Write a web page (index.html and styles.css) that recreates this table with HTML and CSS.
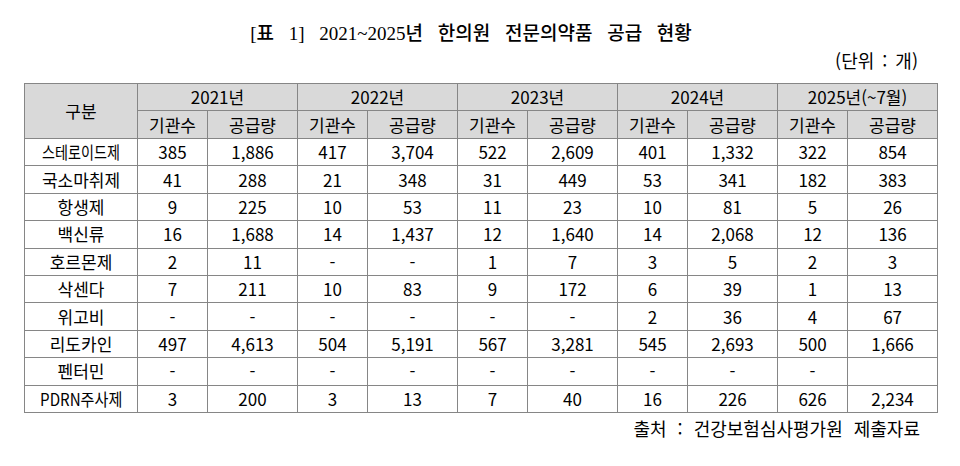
FILE: index.html
```html
<!DOCTYPE html>
<html lang="ko">
<head>
<meta charset="utf-8">
<link rel="stylesheet" href="styles.css">
</head>
<body>
<div class="page">
  <h1 class="title">[표 1] 2021~2025년 한의원 전문의약품 공급 현황</h1>
  <div class="unit">(단위 : 개)</div>
  <table class="data">
    <colgroup>
      <col class="c-name">
      <col class="c-n"><col class="c-q">
      <col class="c-n"><col class="c-q">
      <col class="c-n"><col class="c-q">
      <col class="c-n"><col class="c-q">
      <col class="c-n"><col class="c-q">
    </colgroup>
    <thead>
      <tr class="h1">
        <th rowspan="2">구분</th>
        <th colspan="2">2021년</th>
        <th colspan="2">2022년</th>
        <th colspan="2">2023년</th>
        <th colspan="2">2024년</th>
        <th colspan="2">2025년(~7월)</th>
      </tr>
      <tr class="h2">
        <th>기관수</th><th>공급량</th>
        <th>기관수</th><th>공급량</th>
        <th>기관수</th><th>공급량</th>
        <th>기관수</th><th>공급량</th>
        <th>기관수</th><th>공급량</th>
      </tr>
    </thead>
    <tbody>
      <tr><td><span class="squeeze s83">스테로이드제</span></td><td>385</td><td>1,886</td><td>417</td><td>3,704</td><td>522</td><td>2,609</td><td>401</td><td>1,332</td><td>322</td><td>854</td></tr>
      <tr><td>국소마취제</td><td>41</td><td>288</td><td>21</td><td>348</td><td>31</td><td>449</td><td>53</td><td>341</td><td>182</td><td>383</td></tr>
      <tr><td>항생제</td><td>9</td><td>225</td><td>10</td><td>53</td><td>11</td><td>23</td><td>10</td><td>81</td><td>5</td><td>26</td></tr>
      <tr><td>백신류</td><td>16</td><td>1,688</td><td>14</td><td>1,437</td><td>12</td><td>1,640</td><td>14</td><td>2,068</td><td>12</td><td>136</td></tr>
      <tr><td>호르몬제</td><td>2</td><td>11</td><td>-</td><td>-</td><td>1</td><td>7</td><td>3</td><td>5</td><td>2</td><td>3</td></tr>
      <tr><td>삭센다</td><td>7</td><td>211</td><td>10</td><td>83</td><td>9</td><td>172</td><td>6</td><td>39</td><td>1</td><td>13</td></tr>
      <tr><td>위고비</td><td>-</td><td>-</td><td>-</td><td>-</td><td>-</td><td>-</td><td>2</td><td>36</td><td>4</td><td>67</td></tr>
      <tr><td>리도카인</td><td>497</td><td>4,613</td><td>504</td><td>5,191</td><td>567</td><td>3,281</td><td>545</td><td>2,693</td><td>500</td><td>1,666</td></tr>
      <tr><td>펜터민</td><td>-</td><td>-</td><td>-</td><td>-</td><td>-</td><td>-</td><td>-</td><td>-</td><td>-</td><td></td></tr>
      <tr><td><span class="squeeze s90">PDRN주사제</span></td><td>3</td><td>200</td><td>3</td><td>13</td><td>7</td><td>40</td><td>16</td><td>226</td><td>626</td><td>2,234</td></tr>
    </tbody>
  </table>
  <div class="source">출처 : 건강보험심사평가원 제출자료</div>
</div>
</body>
</html>
```

FILE: styles.css
```css
html, body {
  margin: 0;
  padding: 0;
  background: #ffffff;
}

.page {
  width: 960px;
  height: 466px;
  padding-top: 20px;
  box-sizing: border-box;
  color: #000000;
  font-family: "Noto Sans CJK KR", "Noto Sans", sans-serif;
}

.title {
  margin: 0;
  padding-right: 18px;
  text-align: center;
  font-family: "Liberation Serif", "Noto Sans CJK KR", serif;
  font-size: 19px;
  font-weight: 500;
  line-height: 28px;
  word-spacing: 10px;
  color: #000000;
}

.unit {
  margin-top: 0;
  padding-right: 42px;
  text-align: right;
  font-size: 18px;
  line-height: 24px;
  word-spacing: 3px;
}

.data {
  margin: 11px 0 0 24px;
  width: 913px;
  border-collapse: collapse;
  table-layout: fixed;
  font-size: 17px;
}

.c-name { width: 113px; }
.c-n { width: 70px; }
.c-q { width: 90px; }

.data th,
.data td {
  border: 1px solid #868686;
  padding: 0;
  text-align: center;
  font-weight: 400;
  line-height: 20px;
  white-space: nowrap;
}

.data thead th {
  background: #d9d9d9;
}

.data tr.h1 { height: 27px; }
.data tr.h2 { height: 28px; }
.data tbody tr { height: 27.4px; }

.squeeze {
  display: inline-block;
  transform-origin: center;
}

.s83 { transform: scaleX(0.83); margin: 0 -9px; }
.s90 { transform: scaleX(0.89); margin: 0 -5px; }

.source {
  margin-top: 3px;
  padding-right: 40px;
  text-align: right;
  font-size: 18px;
  line-height: 24px;
  word-spacing: 6px;
}
```
